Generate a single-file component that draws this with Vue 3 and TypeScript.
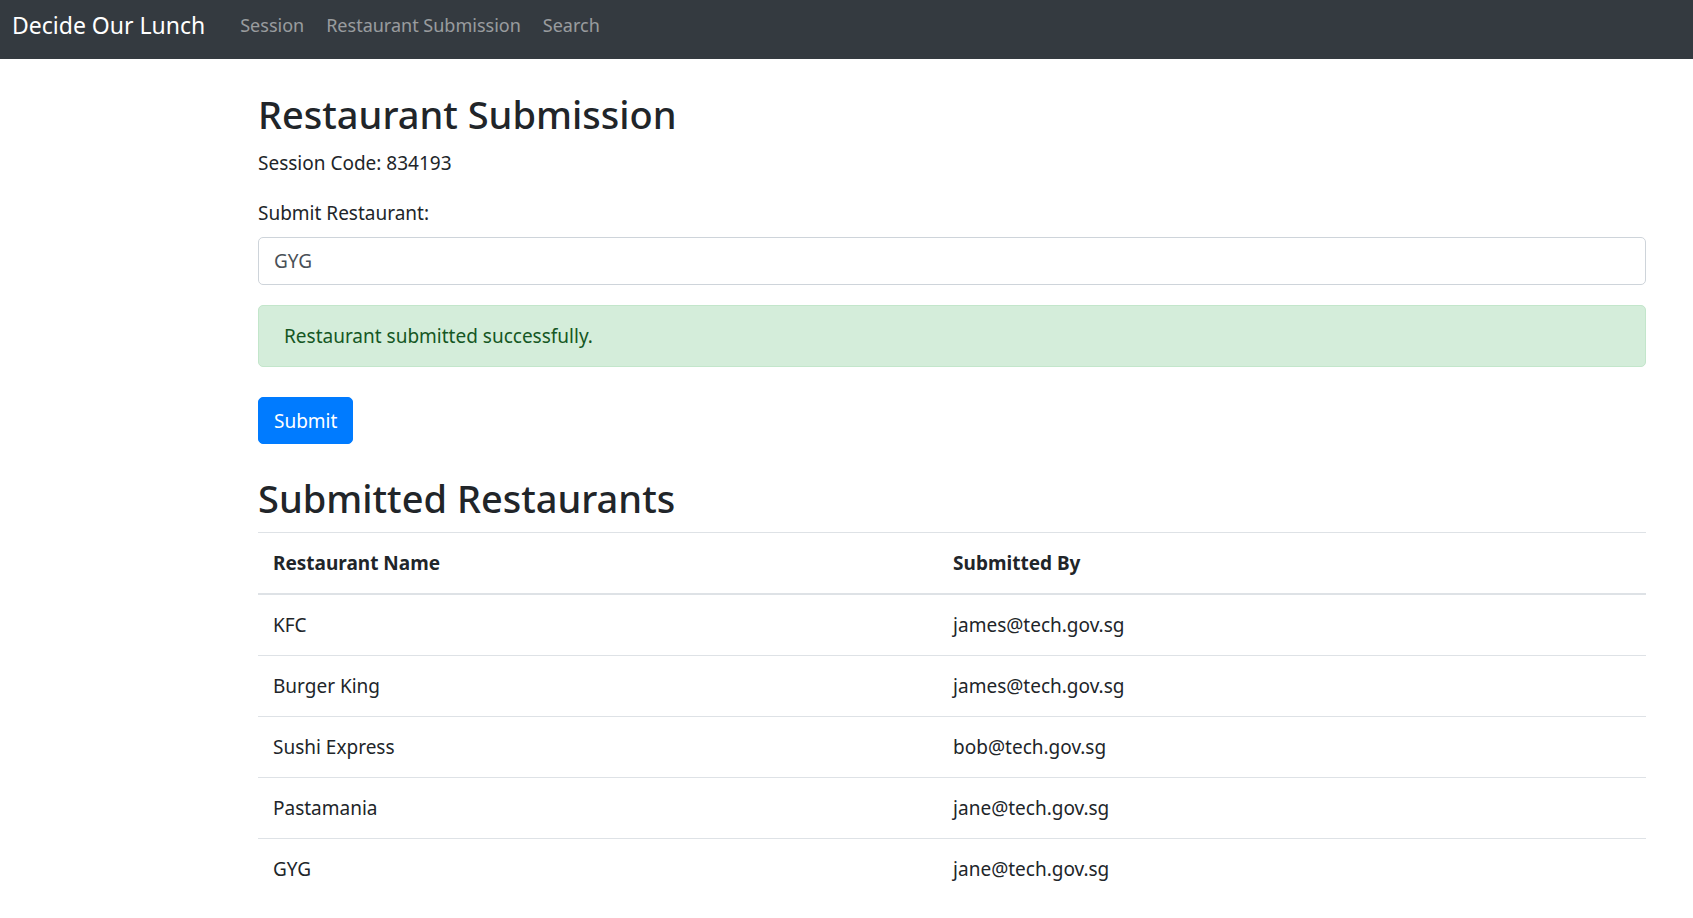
<script setup lang="ts">
import { ref } from 'vue'

interface Submission {
  name: string
  submittedBy: string
}

const sessionCode = '834193'
const restaurant = ref('GYG')
const links: string[] = ['Session', 'Restaurant Submission', 'Search']
const submissions = ref<Submission[]>([
  { name: 'KFC', submittedBy: 'james@tech.gov.sg' },
  { name: 'Burger King', submittedBy: 'james@tech.gov.sg' },
  { name: 'Sushi Express', submittedBy: 'bob@tech.gov.sg' },
  { name: 'Pastamania', submittedBy: 'jane@tech.gov.sg' },
  { name: 'GYG', submittedBy: 'jane@tech.gov.sg' },
])
</script>

<template>
  <div class="app">
    <nav class="navbar">
      <a class="brand" href="#">Decide Our Lunch</a>
      <ul class="nav-list">
        <li v-for="link in links" :key="link">
          <a class="nav-link" href="#">{{ link }}</a>
        </li>
      </ul>
    </nav>
    <div class="layout">
      <main class="content">
        <h1 class="title">Restaurant Submission</h1>
        <p class="session">Session Code: {{ sessionCode }}</p>
        <form @submit.prevent>
          <label class="label" for="restaurant">Submit Restaurant:</label>
          <input id="restaurant" v-model="restaurant" class="field" type="text" />
          <div class="alert" role="alert">Restaurant submitted successfully.</div>
          <button class="submit" type="submit">Submit</button>
        </form>
        <h1 class="title list-title">Submitted Restaurants</h1>
        <table class="table">
          <thead>
            <tr>
              <th class="name-col" scope="col">Restaurant Name</th>
              <th scope="col">Submitted By</th>
            </tr>
          </thead>
          <tbody>
            <tr v-for="(item, index) in submissions" :key="index">
              <td>{{ item.name }}</td>
              <td>{{ item.submittedBy }}</td>
            </tr>
          </tbody>
        </table>
      </main>
    </div>
  </div>
</template>

<style>
body {
  margin: 0;
  background: #fff;
}
</style>

<style scoped>
.app,
.field,
.submit {
  font-family: "Segoe UI", "Noto Sans", "Open Sans", sans-serif;
  font-size: 19px;
  font-weight: 400;
  line-height: 30px;
}
.app {
  color: #212529;
}
.app * {
  box-sizing: border-box;
}
.navbar {
  display: flex;
  align-items: flex-start;
  gap: 24px;
  height: 59px;
  padding: 0 12px;
  background: #343a40;
}
.brand {
  padding: 10px 0;
  color: #fff;
  font-size: 23px;
  text-decoration: none;
  white-space: nowrap;
}
.nav-list {
  display: flex;
  margin: 0;
  padding: 0;
  list-style: none;
  font-size: 18px;
}
.nav-link {
  display: block;
  padding: 10px 11px;
  color: rgba(255, 255, 255, 0.5);
  text-decoration: none;
  white-space: nowrap;
}
.layout {
  display: grid;
  grid-template-columns: 1fr 6fr;
  padding: 31px 27px 20px 0;
}
.content {
  grid-column: 2;
  min-width: 0;
  padding: 0 20px;
}
.title {
  margin: 0 0 10px;
  font-size: 38px;
  font-weight: 500;
  line-height: 48px;
}
.session {
  margin: 0 0 20px;
}
.label {
  display: block;
  margin-bottom: 9px;
}
.field {
  display: block;
  width: 100%;
  height: 48px;
  padding: 8px 15px;
  border: 1px solid #ced4da;
  border-radius: 5px;
  background: #fff;
  color: #495057;
}
.alert {
  margin: 20px 0 30px;
  padding: 15px 25px;
  border: 1px solid #c3e6cb;
  border-radius: 5px;
  background: #d4edda;
  color: #155724;
}
.submit {
  display: block;
  height: 47px;
  padding: 0 15px;
  border: 1px solid #007bff;
  border-radius: 5px;
  background: #007bff;
  color: #fff;
}
.list-title {
  margin-top: 30px;
}
.table {
  width: 100%;
  border-collapse: separate;
  border-spacing: 0;
}
.name-col {
  width: 49%;
}
.table th,
.table td {
  padding: 15px;
  border-top: 1px solid #dee2e6;
  text-align: left;
  vertical-align: top;
}
.table th {
  border-bottom: 1px solid #dee2e6;
  font-weight: 700;
}
</style>
